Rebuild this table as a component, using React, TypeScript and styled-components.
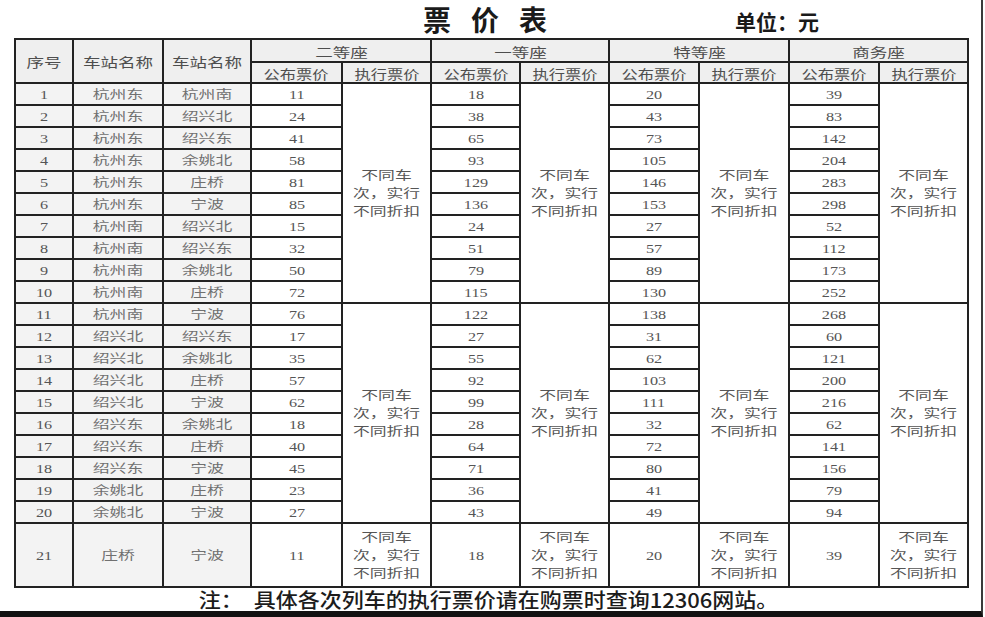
import React from 'react';
import styled, { createGlobalStyle } from 'styled-components';

const GlobalStyle = createGlobalStyle`
  html, body {
    margin: 0;
    padding: 0;
    background: #ffffff;
  }
  body {
    font-family: "Liberation Serif", "Noto Sans CJK SC", serif;
  }
`;

const Page = styled.div`
  box-sizing: border-box;
  width: 983px;
  height: 617px;
  border-right: 2px solid #3a3a3a;
  border-bottom: 6px solid #111111;
  display: flex;
  flex-direction: column;
  overflow: hidden;
`;

const TitleBar = styled.div`
  height: 38px;
  flex: none;
  display: flex;
  align-items: center;
  padding-left: 423px;
  box-sizing: border-box;
`;

const Title = styled.h1`
  margin: 0;
  font-family: "Noto Sans CJK SC", sans-serif;
  font-size: 28px;
  line-height: 34px;
  font-weight: 700;
  color: #1a1a1a;
  letter-spacing: 20px;
  width: 312px;
`;

const Unit = styled.div`
  font-family: "Noto Sans CJK SC", sans-serif;
  font-size: 21px;
  line-height: 26px;
  font-weight: 700;
  color: #1a1a1a;
  padding-top: 4px;
`;

// the source picture is stretched sideways, so text is widened to match
const Wide = styled.span<{ $x?: number }>`
  display: inline-block;
  vertical-align: middle;
  transform: scaleX(${(p) => p.$x ?? 1.35});
  transform-origin: center;
  white-space: nowrap;
`;

const Table = styled.table`
  flex: none;
  border-collapse: collapse;
  table-layout: fixed;
  width: 953px;
  margin-left: 14px;
  border: 2px solid #1e1e1e;
`;

const Row = styled.tr<{ $h: number }>`
  height: ${(p) => p.$h}px;
`;

const Head = styled.th`
  border: 2px solid #222222;
  background: #efefef;
  font-family: "Noto Sans CJK SC", sans-serif;
  font-weight: 400;
  font-size: 13px;
  line-height: 15px;
  color: #4e4e4e;
  padding: 0;
  text-align: center;
  vertical-align: middle;
`;

const Cell = styled.td<{ $shade?: boolean; $soft?: boolean }>`
  border: 2px solid #222222;
  background: ${(p) => (p.$shade ? '#f3f3f3' : '#ffffff')};
  font-family: "Liberation Serif", "Noto Sans CJK SC", serif;
  font-size: 12px;
  color: ${(p) => (p.$soft ? '#707070' : '#555555')};
  padding: 0;
  text-align: center;
  vertical-align: middle;
  line-height: 14px;
`;

const Note = styled.td`
  border: 2px solid #222222;
  background: #ffffff;
  font-family: "Noto Sans CJK SC", sans-serif;
  font-size: 12px;
  line-height: 18px;
  color: #555555;
  padding: 0;
  text-align: center;
  vertical-align: middle;
`;

const NoteLine = styled(Wide)`
  display: block;
`;

const Footer = styled.div`
  flex: 1;
  display: flex;
  align-items: center;
  justify-content: center;
  font-family: "Noto Sans CJK SC", sans-serif;
  font-size: 20px;
  line-height: 22px;
  font-weight: 500;
  color: #1c1c1c;
  padding-right: 4px;
`;

const FooterText = styled.span`
  display: inline-flex;
  gap: 10px;
  transform: scaleX(1.1);
  white-space: nowrap;
`;

type Fare = [number, string, string, number, number, number, number];

const fares: Fare[] = [
  [1, '杭州东', '杭州南', 11, 18, 20, 39],
  [2, '杭州东', '绍兴北', 24, 38, 43, 83],
  [3, '杭州东', '绍兴东', 41, 65, 73, 142],
  [4, '杭州东', '余姚北', 58, 93, 105, 204],
  [5, '杭州东', '庄桥', 81, 129, 146, 283],
  [6, '杭州东', '宁波', 85, 136, 153, 298],
  [7, '杭州南', '绍兴北', 15, 24, 27, 52],
  [8, '杭州南', '绍兴东', 32, 51, 57, 112],
  [9, '杭州南', '余姚北', 50, 79, 89, 173],
  [10, '杭州南', '庄桥', 72, 115, 130, 252],
  [11, '杭州南', '宁波', 76, 122, 138, 268],
  [12, '绍兴北', '绍兴东', 17, 27, 31, 60],
  [13, '绍兴北', '余姚北', 35, 55, 62, 121],
  [14, '绍兴北', '庄桥', 57, 92, 103, 200],
  [15, '绍兴北', '宁波', 62, 99, 111, 216],
  [16, '绍兴东', '余姚北', 18, 28, 32, 62],
  [17, '绍兴东', '庄桥', 40, 64, 72, 141],
  [18, '绍兴东', '宁波', 45, 71, 80, 156],
  [19, '余姚北', '庄桥', 23, 36, 41, 79],
  [20, '余姚北', '宁波', 27, 43, 49, 94],
  [21, '庄桥', '宁波', 11, 18, 20, 39],
];

const colWidths = [58, 90, 88, 91, 89, 89, 89, 90, 90, 90, 89];
const classes = ['二等座', '一等座', '特等座', '商务座'];

const Discount = ({ span }: { span: number }) => (
  <Note rowSpan={span}>
    <NoteLine $x={1.4}>不同车</NoteLine>
    <NoteLine $x={1.4}>次，实行</NoteLine>
    <NoteLine $x={1.4}>不同折扣</NoteLine>
  </Note>
);

const App = () => {
  return (
    <Page>
      <GlobalStyle />
      <TitleBar>
        <Title>票价表</Title>
        <Unit>单位：元</Unit>
      </TitleBar>
      <Table>
        <colgroup>
          {colWidths.map((w, i) => (
            <col key={i} style={{ width: w }} />
          ))}
        </colgroup>
        <thead>
          <Row $h={23}>
            <Head rowSpan={2}>
              <Wide>序号</Wide>
            </Head>
            <Head rowSpan={2}>
              <Wide>车站名称</Wide>
            </Head>
            <Head rowSpan={2}>
              <Wide>车站名称</Wide>
            </Head>
            {classes.map((c) => (
              <Head key={c} colSpan={2}>
                <Wide>{c}</Wide>
              </Head>
            ))}
          </Row>
          <Row $h={21}>
            {classes.map((c) => (
              <React.Fragment key={c}>
                <Head>
                  <Wide $x={1.25}>公布票价</Wide>
                </Head>
                <Head>
                  <Wide $x={1.25}>执行票价</Wide>
                </Head>
              </React.Fragment>
            ))}
          </Row>
        </thead>
        <tbody>
          {fares.map(([no, from, to, a, b, c, d]) => {
            const first = no === 1 || no === 11 || no === 21;
            const span = no === 21 ? 1 : 10;
            return (
              <Row key={no} $h={no === 21 ? 64 : 22}>
                <Cell $shade>
                  <Wide>{no}</Wide>
                </Cell>
                <Cell $shade $soft>
                  <Wide $x={1.4}>{from}</Wide>
                </Cell>
                <Cell $shade $soft>
                  <Wide $x={1.4}>{to}</Wide>
                </Cell>
                <Cell>
                  <Wide>{a}</Wide>
                </Cell>
                {first && <Discount span={span} />}
                <Cell>
                  <Wide>{b}</Wide>
                </Cell>
                {first && <Discount span={span} />}
                <Cell>
                  <Wide>{c}</Wide>
                </Cell>
                {first && <Discount span={span} />}
                <Cell>
                  <Wide>{d}</Wide>
                </Cell>
                {first && <Discount span={span} />}
              </Row>
            );
          })}
        </tbody>
      </Table>
      <Footer>
        <FooterText>
          <span>注：</span>
          <span>具体各次列车的执行票价请在购票时查询12306网站。</span>
        </FooterText>
      </Footer>
    </Page>
  );
};

export default App;
